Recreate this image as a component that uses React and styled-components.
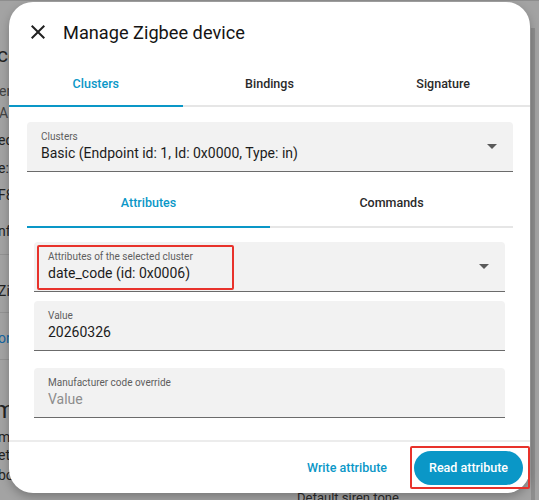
import React from "react";
import styled, { createGlobalStyle } from "styled-components";

const Global = createGlobalStyle`
  html, body { margin: 0; padding: 0; }
  body {
    width: 539px;
    height: 500px;
    overflow: hidden;
    font-family: Roboto, "Noto Sans", Arial, sans-serif;
    background: #a3a3a3;
  }
`;

const PRIMARY = "#0a97c7";

const Page = styled.div`
  position: relative;
  width: 539px;
  height: 500px;
  overflow: hidden;
  background: #a3a3a3;
`;

/* dimmed page content behind the dialog */
const Behind = styled.div`
  display: flex;
  flex-direction: column;
  padding-top: 19px;
  height: 100%;
  box-sizing: border-box;
  border-top: 1px solid #8e8e8e;
  color: #1d1d1d;
`;

const BehindLine = styled.div`
  margin-left: ${(p) => p.$shift || -2}px;
  margin-top: ${(p) => p.$gap || 0}px;
  font-size: ${(p) => p.$size || 14}px;
  line-height: ${(p) => p.$lh || 18}px;
  color: ${(p) => p.$color || "#222"};
  white-space: nowrap;
`;

const BehindRule = styled.hr`
  margin: ${(p) => p.$gap || 0}px 0 0;
  border: 0;
  border-top: 1px solid #929292;
  width: 60px;
`;

const BehindFooter = styled.div`
  position: absolute;
  left: 297px;
  top: 490px;
  font-size: 13px;
  color: #2a2a2a;
`;

const Scroll = styled.div`
  position: absolute;
  right: 4px;
  top: 28px;
  bottom: 0;
  width: 4px;
  background: #8d8d8d;
`;

const Dialog = styled.section`
  position: absolute;
  left: 9px;
  top: 2px;
  width: 521px;
  height: 491px;
  background: #fff;
  border-radius: 24px;
  box-shadow: 0 4px 10px rgba(0, 0, 0, 0.25);
  display: flex;
  flex-direction: column;
  overflow: hidden;
`;

const Header = styled.header`
  display: flex;
  align-items: center;
  height: 60px;
  padding-left: 17px;
  gap: 13px;
  box-sizing: border-box;
`;

const CloseBtn = styled.button`
  width: 24px;
  height: 24px;
  padding: 0;
  border: 0;
  background: none;
  display: flex;
  align-items: center;
  justify-content: center;
  color: #212121;
`;

const Title = styled.h2`
  margin: 0;
  font-size: 18.2px;
  font-weight: 400;
  color: #141414;
`;

const TabBar = styled.nav`
  display: grid;
  grid-template-columns: repeat(${(p) => p.$count}, 1fr);
  border-bottom: 2px solid #e6e6e6;
  margin: ${(p) => p.$inset || 0};
`;

const Tab = styled.div`
  height: ${(p) => p.$h || 43}px;
  display: flex;
  align-items: center;
  justify-content: center;
  font-size: 12.5px;
  font-weight: 500;
  color: ${(p) => (p.$active ? PRIMARY : "#2a2a2a")};
  position: relative;
  &::after {
    content: "";
    position: absolute;
    left: 0;
    right: 0;
    bottom: -2px;
    height: 2px;
    background: ${(p) => (p.$active ? PRIMARY : "transparent")};
  }
`;

const Body = styled.div`
  flex: 1;
  padding: 15px 17px 0 18px;
  display: flex;
  flex-direction: column;
`;

const Inner = styled.div`
  padding: 14px 8px 0 7px;
  display: flex;
  flex-direction: column;
`;

const Field = styled.div`
  position: relative;
  height: 50px;
  box-sizing: border-box;
  background: #f2f2f2;
  border-radius: 4px 4px 0 0;
  border-bottom: 1px solid #6b6b6b;
  padding: 8px 14px 0;
  margin-top: ${(p) => p.$gap || 0}px;
  display: flex;
  flex-direction: column;
`;

const FieldLabel = styled.span`
  font-size: 10px;
  line-height: 14px;
  color: #5e5e5e;
`;

const FieldValue = styled.span`
  font-size: 14px;
  line-height: 19px;
  color: ${(p) => (p.$placeholder ? "#8d8d8d" : "#1c1c1c")};
  white-space: nowrap;
`;

const Caret = styled.span`
  position: absolute;
  right: 16px;
  top: 22px;
  width: 0;
  height: 0;
  border-left: 5px solid transparent;
  border-right: 5px solid transparent;
  border-top: 5px solid #5a5a5a;
`;

const Marked = styled.div`
  position: absolute;
  pointer-events: none;
  border: 2px solid #e8322b;
  border-radius: 2px;
  left: ${(p) => p.$l}px;
  top: ${(p) => p.$t}px;
  width: ${(p) => p.$w}px;
  height: ${(p) => p.$h}px;
  box-sizing: border-box;
`;

const Footer = styled.footer`
  margin-top: auto;
  border-top: 2px solid #ececec;
  height: 53px;
  box-sizing: border-box;
  display: flex;
  align-items: center;
  justify-content: flex-end;
  gap: 27px;
  padding-right: 7px;
`;

const TextButton = styled.button`
  border: 0;
  background: none;
  padding: 0;
  font-family: inherit;
  font-size: 12.5px;
  font-weight: 500;
  color: ${PRIMARY};
`;

const FilledButton = styled.button`
  position: relative;
  border: 0;
  height: 34px;
  padding: 0 15px;
  border-radius: 17px;
  background: ${PRIMARY};
  color: #fff;
  font-family: inherit;
  font-size: 12.5px;
  font-weight: 500;
`;

export default function App() {
  return (
    <>
      <Global />
      <Page>
        <Behind>
          <BehindLine $size={21} $lh={30} $gap={20} $shift={-3}>ce</BehindLine>
          <BehindLine $gap={12} $color="#444" $shift={-1}>er</BehindLine>
          <BehindLine $gap={4} $color="#444" $shift={-1}>A</BehindLine>
          <BehindLine $gap={9}>ed</BehindLine>
          <BehindLine $gap={10}>e:</BehindLine>
          <BehindLine $gap={9}>F8</BehindLine>
          <BehindLine $gap={18}>nf</BehindLine>
          <BehindRule $gap={14} />
          <BehindLine $gap={27}>Zi</BehindLine>
          <BehindRule $gap={12} />
          <BehindLine $gap={16} $color="#1565a0">or</BehindLine>
          <BehindRule $gap={12} />
          <BehindLine $size={24} $lh={30} $gap={35} $shift={-6}>m</BehindLine>
          <BehindLine $gap={3}>m</BehindLine>
          <BehindLine $gap={0}>et</BehindLine>
          <BehindLine $gap={2}>bo</BehindLine>
        </Behind>
        <Scroll />
        <BehindFooter>Default siren tone</BehindFooter>

        <Dialog>
          <Header>
            <CloseBtn aria-label="Close">
              <svg width="24" height="24" viewBox="0 0 24 24">
                <path
                  fill="currentColor"
                  d="M19,6.41L17.59,5L12,10.59L6.41,5L5,6.41L10.59,12L5,17.59L6.41,19L12,13.41L17.59,19L19,17.59L13.41,12L19,6.41Z"
                />
              </svg>
            </CloseBtn>
            <Title>Manage Zigbee device</Title>
          </Header>

          <TabBar $count={3}>
            <Tab $active>Clusters</Tab>
            <Tab>Bindings</Tab>
            <Tab>Signature</Tab>
          </TabBar>

          <Body>
            <Field>
              <FieldLabel>Clusters</FieldLabel>
              <FieldValue>Basic (Endpoint id: 1, Id: 0x0000, Type: in)</FieldValue>
              <Caret />
            </Field>

            <TabBar $count={2} $inset="6px 0 0">
              <Tab $active $h={48}>Attributes</Tab>
              <Tab $h={48}>Commands</Tab>
            </TabBar>

            <Inner>
              <Field>
                <FieldLabel>Attributes of the selected cluster</FieldLabel>
                <FieldValue>date_code (id: 0x0006)</FieldValue>
                <Caret />
                <Marked $l={3} $t={3} $w={197} $h={45} />
              </Field>
              <Field $gap={9}>
                <FieldLabel>Value</FieldLabel>
                <FieldValue>20260326</FieldValue>
              </Field>
              <Field $gap={17}>
                <FieldLabel>Manufacturer code override</FieldLabel>
                <FieldValue $placeholder>Value</FieldValue>
              </Field>
            </Inner>
          </Body>

          <Footer>
            <TextButton>Write attribute</TextButton>
            <FilledButton>Read attribute</FilledButton>
          </Footer>
        </Dialog>
        <Marked $l={410} $t={446} $w={120} $h={43} />
      </Page>
    </>
  );
}
